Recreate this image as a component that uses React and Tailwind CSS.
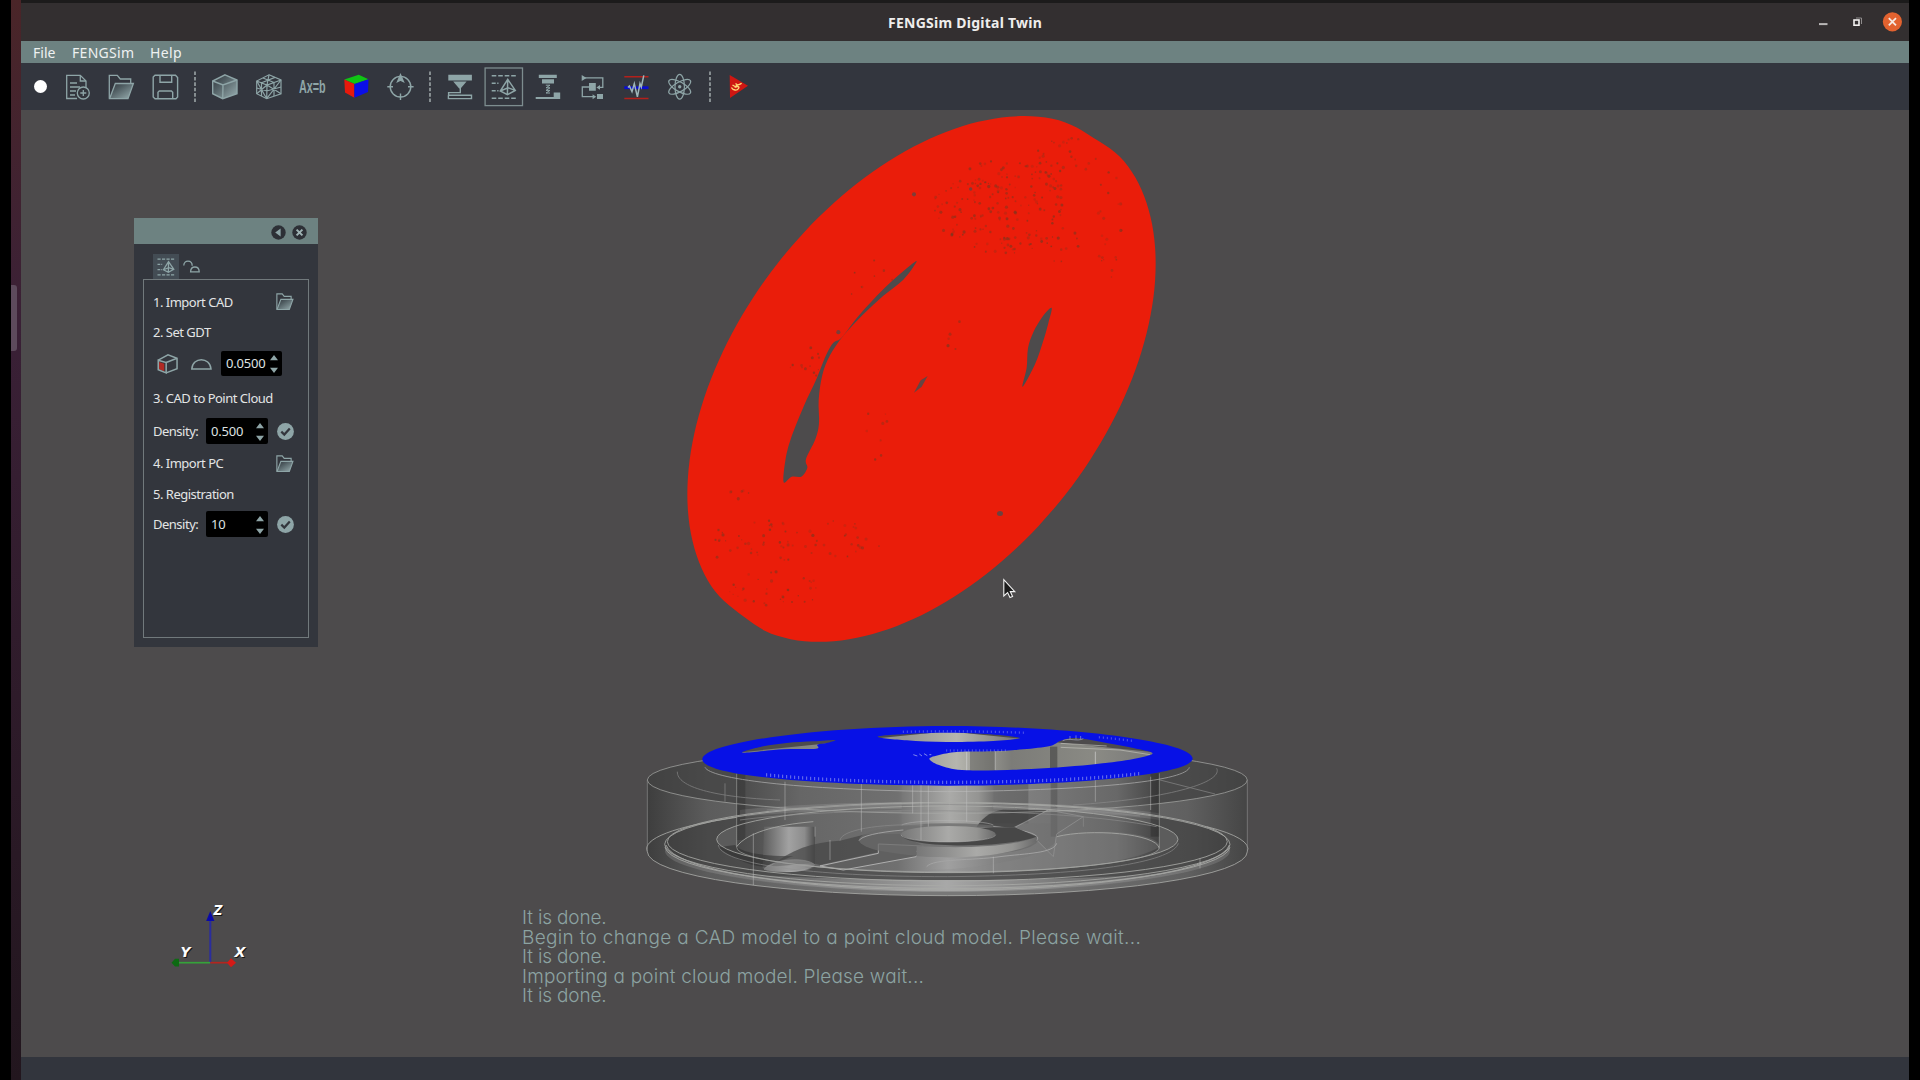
import React from "react";

const INK = "#8ea5a7";

/* Smooth closed or open curve through a list of points. */
function curve(pts, closed = true) {
  const n = pts.length;
  const at = (i) => (closed ? pts[(i + n) % n] : pts[Math.max(0, Math.min(n - 1, i))]);
  let d = `M${pts[0][0]} ${pts[0][1]}`;
  const last = closed ? n : n - 1;
  for (let i = 0; i < last; i++) {
    const [p0, p1, p2, p3] = [at(i - 1), at(i), at(i + 1), at(i + 2)];
    const c1 = [p1[0] + (p2[0] - p0[0]) / 6, p1[1] + (p2[1] - p0[1]) / 6];
    const c2 = [p2[0] - (p3[0] - p1[0]) / 6, p2[1] - (p3[1] - p1[1]) / 6];
    d += `C${c1.map((v) => v.toFixed(1)).join(" ")} ${c2.map((v) => v.toFixed(1)).join(" ")} ${p2[0]} ${p2[1]}`;
  }
  return closed ? d + "Z" : d;
}

function seeded(seed) {
  let s = seed;
  return () => {
    s = (s * 16807) % 2147483647;
    return s / 2147483647;
  };
}

/* ---------- toolbar icons: each fills a 44 x 47 cell ---------- */

function Cell({ children, stroke = 1.3 }) {
  return (
    <svg className="h-[47px] w-11 shrink-0" viewBox="0 0 44 47" fill="none" stroke={INK} strokeWidth={stroke}>
      {children}
    </svg>
  );
}

function Separator({ className }) {
  return (
    <div className={`flex h-[47px] shrink-0 items-center justify-center ${className}`}>
      <svg className="h-8 w-1" viewBox="0 0 4 32">
        <path d="M2 0.5V32" stroke="#a9b3b4" strokeWidth="1.4" strokeDasharray="3.6 1.8" />
      </svg>
    </div>
  );
}

const NewFileIcon = () => (
  <Cell>
    <path d="M21 35.5H10.7V12.3H24.3L30 18V25" />
    <path d="M24.3 12.3V18H30M14 20H21M14 24H24M14 28H20M14 32H19" />
    <circle cx="27.3" cy="30" r="6" fill="#33363d" />
    <path d="M27.3 27V33M24.3 30H30.3" />
  </Cell>
);

function FolderShape() {
  return (
    <>
      <path d="M9.3 35.7V12.3H17.3L20.3 16H30.7V20.3" />
      <path d="M15.3 20.5H33.4L28 35.7H9.6Z" fill="url(#metal)" />
    </>
  );
}
const FolderIcon = () => (
  <Cell>
    <FolderShape />
  </Cell>
);
const SaveIcon = () => (
  <Cell stroke={1.4}>
    <path d="M11 12.3H31.5L33.6 14.6V34L32 35.7H11L9.2 34V14Z" />
    <path d="M16 12.3V19.3H27.7V12.3M14 35.7V29.2L15.3 28H27.4L28.7 29.2V35.7" />
  </Cell>
);
const CubeIcon = () => (
  <Cell stroke={1.4}>
    <path d="M23 11.8L35 17V30.7L20.7 35.7L10.7 30.7V18Z" fill="url(#metal)" />
    <path d="M10.7 18L21 22L35 17M21 22L20.7 35.7" />
  </Cell>
);
const MeshIcon = () => (
  <Cell stroke={1.2}>
    <path d="M23 11.8L35 17V30.7L20.7 35.7L10.7 30.7V18Z" />
    <path d="M10.7 18L21 22L35 17M21 22L20.7 35.7M23 11.8L21 22M17 15L28 19.5M29 14.4L15 20M10.7 18L20.7 35.7M21 22L10.7 30.7M10.7 25L20.8 28L35 24M35 17L20.7 35.7M21 22L35 30.7M28 19.5V33M15.5 20V33" />
  </Cell>
);
const ColorCubeIcon = () => (
  <Cell stroke={0}>
    <path d="M24.7 11.7L34.5 16.3L20.7 21L10.3 16.6Z" fill="#0fc414" />
    <path d="M10.3 16.6L20.4 21V34.8L11 29.5Z" fill="#e8190c" />
    <path d="M20.4 21L34.5 16.3L34 29L20.4 34.8Z" fill="#0a0ee8" />
  </Cell>
);
const TargetIcon = () => (
  <Cell stroke={1.4}>
    <circle cx="22.5" cy="23.7" r="10.3" />
    <path d="M9.3 23.7H15M30 23.7H35.6M22.5 30.5V37" />
    <path d="M22.5 11.8L19.6 18.5L22.5 17.2L25.4 18.5Z" fill={INK} />
  </Cell>
);
const PrinterIcon = () => (
  <Cell stroke={0}>
    <g fill={INK}>
      <path d="M10.3 11.7H33.9V17.4H10.3ZM15.2 18.6H28.6L22.6 25.6H21.2Z" />
    </g>
    <path d="M22.3 25V29.6H10.6V32.3H33.5V35.6H10.4V32.3" fill="none" stroke={INK} strokeWidth="1.4" />
  </Cell>
);
function CloudShape() {
  return (
    <>
      <path d="M9.7 12.7H34.2M9.7 35.3H34.2" strokeDasharray="4.6 1.9" />
      <path d="M9.7 20.3H16.5M9.7 27.7H16.5" strokeDasharray="4 1.5" />
      <path d="M25.7 16.3L18.3 28L25.4 31.7L33.3 27.4ZM25.7 16.3L25.4 31.7M18.3 28L26 24.8L33.3 27.4" />
    </>
  );
}
const CloudIcon = () => (
  <Cell stroke={1.5}>
    <rect x="3.1" y="5" width="37.4" height="37.6" stroke="#7d8d8f" strokeWidth="1.3" />
    <CloudShape />
  </Cell>
);
const MillIcon = () => (
  <Cell stroke={0}>
    <path d="M12.8 11.7H30.8V14.9H12.8ZM16 16.2H28V20.6H16ZM9.7 34H27.7V29.4H34.2V36H9.7Z" fill={INK} />
    <path d="M19.8 22.2H24L20 24.8H24L20 27.4H24L20 30H24" fill="none" stroke={INK} strokeWidth="1" />
  </Cell>
);
const FlowIcon = () => (
  <Cell stroke={1.3}>
    <path d="M15 14.9H32.8V24.4H28M19 24H12.3V33.7H23.5" />
    <path stroke="none" fill={INK} d="M11.7 12L16.5 14.9L11.7 18ZM19 20H25.8V27.8H19ZM27 31H33V36H27ZM22.6 31.2L26.2 33.7L22.6 36.2ZM30 22L26.4 24.4L30 26.8Z" />
  </Cell>
);
const WaveIcon = () => (
  <Cell stroke={1.5}>
    <path d="M10.3 13.7H34.5M10.3 35.6H34.5" stroke="#b3201b" />
    <path d="M10.3 24.7H34.5" stroke="#0a0ed0" strokeWidth="2.8" />
    <path d="M14 24.5L15.4 23L18 28.6L20.3 20.6L23.4 33.8L26 20.5L27.3 24L29.8 12.3" stroke="#9fb6ba" />
  </Cell>
);
const AtomIcon = () => (
  <Cell stroke={1.2}>
    {[30, 90, 150].map((a) => (
      <ellipse key={a} cx="21.7" cy="23.8" rx="12.4" ry="4.7" transform={`rotate(${a} 21.7 23.8)`} />
    ))}
    <circle cx="21.7" cy="23.8" r="1.7" fill={INK} stroke="none" />
  </Cell>
);
const PhoenixIcon = () => (
  <Cell stroke={0}>
    <path d="M12.7 12L31 22.8L13 35Z" fill="#cf1712" />
    <path d="M14.4 24.5C16 27.5 20 28 21.5 25.5C23 23 20 23.5 18.5 24C19 21.5 22 22.5 24.6 20.2M15.5 22L18 23.5M18.5 20.5L20.5 22" stroke="#ffd873" strokeWidth="1.4" fill="none" />
  </Cell>
);

/* ---------- window chrome ---------- */

function TitleBar() {
  return (
    <div className="relative flex h-[38px] shrink-0 items-center justify-center bg-[#332f30]">
      <span className="font-['Noto_Sans','Liberation_Sans',sans-serif] text-[14px] font-bold tracking-[0.25px] text-[#efedec]">
        FENGSim Digital Twin
      </span>
      <div className="absolute right-[7px] top-[9px] flex items-center">
        <svg className="h-5 w-[90px]" viewBox="0 0 90 20">
          <path d="M7 12.1H15.5" stroke="#b9b7b6" strokeWidth="2" />
          <path d="M44 6H49.5V12" stroke="#8f8c8c" strokeWidth="1" fill="none" />
          <rect x="42" y="8" width="5" height="5.2" stroke="#f2f0ef" strokeWidth="1.6" fill="none" />
          <circle cx="80.4" cy="9.8" r="9.6" fill="#e2622f" />
          <path d="M76.8 6.2L84 13.4M84 6.2L76.8 13.4" stroke="#f6e9e2" strokeWidth="1.8" />
        </svg>
      </div>
    </div>
  );
}

function MenuBar() {
  return (
    <nav className="flex h-[22px] shrink-0 items-center bg-[#6d8281] pl-3 pt-0.5 font-['Noto_Sans','Liberation_Sans',sans-serif] text-[14px] leading-none text-[#eef1f1]">
      <span className="w-[39px]">File</span>
      <span className="w-[78px] tracking-[0.3px]">FENGSim</span>
      <span className="tracking-[0.4px]">Help</span>
    </nav>
  );
}

function ToolBar() {
  return (
    <div className="flex h-[47px] shrink-0 items-center bg-[#33363e] pl-1">
      <div className="flex w-[31px] items-center justify-center">
        <div className="size-[13px] rounded-full bg-white" />
      </div>
      <NewFileIcon />
      <FolderIcon />
      <SaveIcon />
      <Separator className="w-[14px]" />
      <CubeIcon />
      <MeshIcon />
      <div className="flex w-11 shrink-0 items-center justify-center">
        <span className="inline-block scale-x-[0.6] pt-px font-['Liberation_Sans',sans-serif] text-[18px] font-bold leading-none text-[#8ea5a7]">
          Ax=b
        </span>
      </div>
      <ColorCubeIcon />
      <TargetIcon />
      <Separator className="w-4" />
      <PrinterIcon />
      <CloudIcon />
      <MillIcon />
      <FlowIcon />
      <WaveIcon />
      <AtomIcon />
      <Separator className="w-[15px]" />
      <PhoenixIcon />
    </div>
  );
}

/* ---------- inspection panel ---------- */

function SmallFolder() {
  return (
    <svg className="ml-auto mr-[14px] size-[18px]" viewBox="8 11 27 27" fill="none" stroke={INK} strokeWidth="1.7">
      <FolderShape />
    </svg>
  );
}

function Check() {
  return (
    <svg className="ml-auto mr-[14.5px] size-[17px]" viewBox="0 0 17 17">
      <circle cx="8.5" cy="8.5" r="8.4" fill={INK} />
      <path d="M4.3 8.6L7.3 11.6L12.8 5.4" stroke="#33363d" strokeWidth="2.2" fill="none" />
    </svg>
  );
}

function Spin({ value, className }) {
  return (
    <div className={`flex items-center justify-between rounded-[2px] bg-black pl-[5px] pr-[3px] tracking-[-0.2px] ${className}`}>
      <span className="text-[#dfe2e2]">{value}</span>
      <svg className="h-[21px] w-[10px]" viewBox="0 0 10 21" fill={INK}>
        <path d="M5 2L9 7.2H1ZM5 20L9 14.8H1Z" />
      </svg>
    </div>
  );
}

function Panel() {
  return (
    <section className="absolute left-[113px] top-[108px] flex h-[429px] w-[184px] flex-col bg-[#33363d] font-['Noto_Sans','Liberation_Sans',sans-serif] text-[13px] leading-none tracking-[-0.5px] text-[#e3e5e5]">
      <header className="flex h-[26px] shrink-0 items-center justify-end gap-[6px] bg-[#6d8281] pr-[11px] pt-0.5">
        <svg className="size-[15px]" viewBox="0 0 15 15">
          <circle cx="7.5" cy="7.5" r="7.2" fill="#2d3036" />
          <path d="M9.6 3.6V11.4L4.2 7.5Z" fill="#8ea5a7" />
        </svg>
        <svg className="size-[15px]" viewBox="0 0 15 15">
          <circle cx="7.5" cy="7.5" r="7.2" fill="#2d3036" />
          <path d="M4.6 4.6L10.4 10.4M10.4 4.6L4.6 10.4" stroke="#9fb3b4" strokeWidth="2" />
        </svg>
      </header>
      <div className="flex h-[35px] shrink-0 items-end pl-[19px]">
        <div className="flex h-[25px] w-[26px] items-center justify-center bg-[#434c54]">
          <svg className="h-[18px] w-[18px]" viewBox="9 11 26 26" fill="none" stroke={INK} strokeWidth="1.8">
            <CloudShape />
          </svg>
        </div>
        <svg className="ml-1 h-[25px] w-[18px]" viewBox="0 0 18 25" fill="none" stroke={INK} strokeWidth="1.3">
          <path d="M0.8 11.5C0.8 5.5 9.2 5.5 9.2 11.8" />
          <path d="M7.6 17.8C7.8 11.4 16 11.4 16.2 17.8Z" />
        </svg>
      </div>
      <div className="mx-[9px] mb-[9px] flex flex-1 flex-col border border-[#71797c] pl-[9px]">
        <div className="mt-[10px] flex h-[24px] items-center">
          <span>1. Import CAD</span>
          <SmallFolder />
        </div>
        <div className="mt-[7px] flex h-[23px] items-center">2. Set GDT</div>
        <div className="mt-[7px] flex h-[25px] items-center">
          <svg className="ml-[4px] h-[22px] w-[21px]" viewBox="0 0 22 22" fill="none" stroke={INK} strokeWidth="1.6">
            <path d="M2.2 9L7.6 10.8V18.6L2.2 16.4Z" fill="#b02a24" stroke="none" />
            <path d="M1.3 7V17L9.6 20.3V9.4Z" />
            <path d="M1.3 7L11.5 1.4L21 5V16L9.6 20.3M9.6 9.4L21 5" />
          </svg>
          <svg className="ml-[13px] h-[22px] w-[21px]" viewBox="0 0 21 22" fill="none" stroke={INK} strokeWidth="1.5">
            <path d="M0.8 16C1.5 3.6 19 3.6 20 16Z" />
          </svg>
          <Spin value="0.0500" className="ml-[9px] h-[25px] w-[61px]" />
        </div>
        <div className="mt-[10px] flex h-[24px] items-center">3. CAD to Point Cloud</div>
        <div className="mt-[8px] flex h-[26px] items-center">
          <span className="w-[53px]">Density:</span>
          <Spin value="0.500" className="h-[26px] w-[62px]" />
          <Check />
        </div>
        <div className="mt-[8px] flex h-[23px] items-center">
          <span>4. Import PC</span>
          <SmallFolder />
        </div>
        <div className="mt-[7px] flex h-[24px] items-center">5. Registration</div>
        <div className="mt-[5px] flex h-[26px] items-center">
          <span className="w-[53px]">Density:</span>
          <Spin value="10" className="h-[26px] w-[62px]" />
          <Check />
        </div>
      </div>
    </section>
  );
}

/* ---------- scanned point cloud ---------- */

/* Tilted disc: an ellipse whose rim flattens slightly at two places. */
function discOutline() {
  const rad = Math.PI / 180;
  const pts = [];
  for (let a = 0; a < 360; a += 4) {
    const dent = 0.011 * Math.exp(-(((a - 42) / 8) ** 2)) + 0.01 * Math.exp(-(((a - 219) / 8) ** 2));
    const k = 1 - dent;
    pts.push([
      +(754.5 + 702.5 * k * Math.cos(a * rad)).toFixed(1),
      +(781 - 736 * k * Math.cos((a - 64) * rad)).toFixed(1),
    ]);
  }
  return curve(pts);
}

const SLOT = [
  [740, 452], [712, 470], [640, 530], [570, 600], [515, 665], [490, 680], [468, 715], [440, 780], [400, 860],
  [362, 950], [346, 1010], [341, 1070], [365, 1055], [395, 1054], [412, 1030], [408, 1005], [436, 950],
  [447, 905], [446, 840], [457, 770], [480, 715], [520, 660], [580, 600], [640, 548], [700, 503],
];
const SLIT = [[1145, 582], [1118, 606], [1090, 650], [1074, 695], [1070, 750], [1058, 803], [1095, 740], [1118, 680], [1135, 625]];
const SPECK_FIELDS = [
  [1000, 300, 210, 130, 190], [1190, 160, 90, 60, 26], [1320, 340, 40, 180, 22], [1180, 420, 60, 60, 10],
  [410, 720, 60, 60, 14], [620, 930, 40, 80, 8], [390, 1230, 250, 60, 60], [300, 1370, 160, 50, 34],
  [600, 500, 80, 60, 8], [860, 660, 30, 60, 5], [200, 1110, 40, 30, 6], [150, 1250, 20, 60, 6],
];

function specks() {
  const r = seeded(4217);
  const out = [];
  for (const [cx, cy, rx, ry, n] of SPECK_FIELDS) {
    for (let i = 0; i < n; i++) {
      const a = r() * Math.PI * 2;
      const q = Math.sqrt(r());
      out.push([cx + Math.cos(a) * rx * q, cy + Math.sin(a) * ry * q, 1.8 + r() * 3, 0.2 + r() * 0.42]);
    }
  }
  return out;
}

function PointCloud() {
  return (
    <g transform="translate(670 100) scale(0.33333 0.35714)">
      <path d={discOutline()} fill="#ea1d0a" />
      {specks().map(([x, y, s, o], i) => (
        <circle key={i} cx={x} cy={y} r={s} fill="#6e3a22" opacity={o} />
      ))}
      <g fill="#4d4b4c">
        <path d={curve(SLOT)} />
        <path d={curve(SLIT)} />
        <path d="M773 773L752 785L732 820L755 803Z" opacity="0.85" />
        <ellipse cx="990" cy="1158" rx="9" ry="7" opacity="0.8" />
        <circle cx="732" cy="264" r="6" opacity="0.7" />
        <circle cx="902" cy="249" r="5" opacity="0.7" />
        <circle cx="505" cy="650" r="6" opacity="0.7" />
      </g>
    </g>
  );
}

/* ---------- CAD wheel with its sampled top face ---------- */

const FACE_HOLES = [
  [[308, 128], [370, 109], [440, 99], [520, 94], [585, 90], [560, 99], [532, 104], [528, 116], [430, 118]],
  [[713, 80], [800, 72], [920, 68], [1040, 72], [1140, 84], [1060, 93], [920, 96], [800, 91]],
  [[868, 147], [900, 134], [960, 125], [1060, 124], [1150, 118], [1230, 108], [1262, 92], [1310, 84], [1400, 99], [1480, 114], [1538, 130], [1480, 147], [1350, 164], [1150, 178], [980, 181], [905, 168]],
];

function Rim() {
  const front = [];
  const back = [];
  for (let x = 380; x <= 1500; x += 12) {
    const y = 148 + 69 * Math.sqrt(1 - ((x - 922) / 735) ** 2);
    front.push(`M${x} ${(y - 5).toFixed(1)}V${(y + 5).toFixed(1)}`);
  }
  for (let x = 790; x <= 1480; x += 12) {
    if (x > 1150 && x < 1370) continue;
    const y = 147 - 83 * Math.sqrt(1 - ((x - 922) / 735) ** 2);
    back.push(`M${x} ${(y - 3.5).toFixed(1)}V${(y + 3.5).toFixed(1)}`);
  }
  for (let x = 920; x <= 1100; x += 11) back.push(`M${x} 118V125`);
  return (
    <g stroke="#a9aef0" strokeWidth="3">
      <path d={front.join("")} opacity="0.65" />
      <path d={back.join("")} opacity="0.45" />
    </g>
  );
}

function Wheel() {
  return (
    <g transform="translate(640 710) scale(0.33333)" fill="none" strokeWidth="2.8">
      {/* outer shell */}
      <path d="M22 210A900 100 0 0 1 1822 210V425A900 132 0 0 1 22 425Z" fill="url(#shell)" />
      <ellipse cx="922" cy="210" rx="900" ry="100" fill="#434343" opacity="0.75" />
      <ellipse cx="922" cy="405" rx="848" ry="128" fill="#3c3c3c" opacity="0.6" />
      <path d="M75 400A848 140 0 0 0 1770 400L1770 425A848 122 0 0 1 75 425Z" fill="#a8a8a8" opacity="0.25" />
      <path d="M180 480C500 566 1350 566 1660 480C1350 520 500 520 180 480Z" fill="url(#band)" />
      <ellipse cx="922" cy="388" rx="692" ry="100" fill="#686868" opacity="0.6" />

      {/* drum */}
      <path d="M290 160H1558V410A634 78 0 0 1 290 410Z" fill="url(#drum)" />
      <path d="M290 283Q600 325 922 288Q1300 290 1558 345V283Q1300 310 922 310Q550 310 290 283Z" fill="#c0c0c0" opacity="0.1" />
      <path d="M300 300C600 265 1250 265 1558 310L1558 330C1250 285 600 285 300 322Z" fill="#d0d0d0" opacity="0.16" />
      <path d="M785 190H1060V350A138 22 0 0 1 785 370Z" fill="url(#hub)" />
      <rect x="1060" y="190" width="105" height="150" fill="#222" opacity="0.2" />
      <rect x="1165" y="190" width="70" height="150" fill="#fff" opacity="0.03" />
      <rect x="1232" y="190" width="20" height="190" fill="#222" opacity="0.22" />
      <rect x="1532" y="190" width="27" height="190" fill="#1c1c1c" opacity="0.3" />
      <rect x="290" y="190" width="26" height="200" fill="#1c1c1c" opacity="0.25" />

      {/* lightening holes and spokes */}
      <path d="M372 350H525V470C500 490 395 490 368 475Z" fill="url(#boss)" />
      <path d="M235 412C270 440 330 470 375 470L460 438C360 440 300 425 285 405Z" fill="#2e2e2e" opacity="0.55" />
      <path d="M390 470C450 420 520 395 600 392L680 372L780 372L850 408L700 430L540 465L520 460Z" fill="#454545" opacity="0.7" />
      <path d="M540 468L715 430V402L850 408L828 440L610 480Z" fill="#606060" stroke="#b4b4b4" />
      <path d="M1010 350C1030 318 1060 302 1090 299L1220 301L1120 352Z" fill="#414141" opacity="0.85" />
      <path d="M1125 352L1225 300L1330 320L1250 372L1240 440L1180 380Z" fill="#707070" opacity="0.5" stroke="#a8a8a8" />
      <path d="M555 482H1100C1300 480 1500 450 1560 410C1560 370 1380 350 1250 378C1260 440 1000 480 860 480" fill="#888" opacity="0.28" />
      <ellipse cx="925" cy="390" rx="268" ry="50" fill="#6b6b6b" opacity="0.75" />
      <path d="M657 392A268 40 0 0 1 790 360M1060 350A268 40 0 0 1 1193 385A268 42 0 0 1 830 424" stroke="#a2a2a2" />
      <path d="M830 408V438C900 445 1100 450 1190 395V380C1100 420 900 412 830 408Z" fill="url(#hub)" />
      <path d="M785 376C790 412 1080 420 1190 380L1125 352H1060Z" fill="#474747" />
      <ellipse cx="925" cy="372" rx="142" ry="24" fill="url(#hub)" />
      <path d="M783 374A142 22 0 0 0 1067 374M785 345A142 18 0 0 1 1060 345" stroke="#b4b4b4" strokeWidth="2" opacity="0.8" />
      <path d="M860 470C880 445 1000 452 1080 440C1160 430 1240 430 1250 400" stroke="#a5a5a5" />

      {/* silhouette lines */}
      <g stroke="#a9aaa7" opacity="0.9">
        <ellipse cx="922" cy="210" rx="900" ry="100" opacity="0.85" />
        <path d="M22 425A900 132 0 0 0 1822 425" />
        <path d="M22 425A900 132 0 0 1 290 322M1822 425A900 132 0 0 0 1700 350" />
        <ellipse cx="922" cy="395" rx="840" ry="118" />
        <ellipse cx="922" cy="403" rx="848" ry="124" />
        <path d="M78 405A846 142 0 0 0 1768 405" />
        <path d="M75 412A848 128 0 0 0 1770 412" />
        <ellipse cx="922" cy="388" rx="692" ry="100" />
        <path d="M290 190V412A634 74 0 0 0 1558 412V190" opacity="0.7" />
        <path d="M290 410C320 370 400 345 520 335M1250 380C1350 355 1550 370 1558 415" />
      </g>
      <g stroke="#8c8c8c" opacity="0.7">
        <path d="M112 185C110 230 220 262 420 270M1730 175C1750 215 1600 265 1300 285" />
        <path d="M195 172C210 205 450 240 922 245C1400 240 1640 210 1648 172" stroke="#b9b9b9" />
        <path d="M235 405C240 460 500 500 922 500C1400 495 1600 450 1615 400" />
        <path d="M255 220V275M22 210V425M1822 210V425M1560 210L1725 252" />
        <path d="M300 330C600 290 1250 290 1550 350M380 300C700 275 1150 275 1500 318M600 392C600 360 720 340 850 345M1330 320V350" />
      </g>
      <g stroke="#c4c4c4" opacity="0.7" strokeWidth="2">
        <path d="M340 370V525M435 215V330M664 215V365M818 225V310M843 225V390M1060 440V490M1366 195V275M1532 200V300M1680 445V475M980 190V335M525 350V380M865 225V350M570 390V450" />
      </g>
      <path d="M372 478C400 445 500 440 525 465C490 490 400 490 372 478Z" fill="#999" opacity="0.5" stroke="#bbb" strokeWidth="2" />

      {/* inside walls seen through the face */}
      <path d="M290 128L922 64L1558 128V160L922 190L290 160Z" fill="url(#inside)" />
      <path d="M980 120V185M1065 120V180M1366 125V165" stroke="#d0d0d0" strokeWidth="3" opacity="0.7" />
      <path d="M990 120H1065V185H990Z" fill="#4a4a48" opacity="0.4" />
      <path d="M1230 110H1252V178H1230Z" fill="#333" opacity="0.5" />
      <path d="M1262 112L1440 120L1530 134M1262 100L1400 108" stroke="#c3c3bb" opacity="0.7" />

      {/* sampled face */}
      <path
        d={"M187 148C190 95 560 48 922 48C1290 48 1655 95 1658 145C1658 195 1290 227 922 227C560 227 187 200 187 148Z" + FACE_HOLES.map((h) => curve(h)).join("")}
        fill="#0711e6"
        fillRule="evenodd"
      />
      <Rim />
      <path d="M820 134L832 138M838 132L846 138M852 131L862 137M868 134H874" stroke="#a9aef0" opacity="0.8" />
      <path d="M1268 92C1290 82 1310 96 1330 86M1290 78V88M1308 76V88M1322 78V88" stroke="#b8bbd8" opacity="0.6" />
    </g>
  );
}

const AXIS_LABELS = [
  { name: "Z", x: 213.5, y: 915, w: 9 },
  { name: "Y", x: 180.5, y: 957, w: 10 },
  { name: "X", x: 234.5, y: 957, w: 11 },
];

function AxisText() {
  return AXIS_LABELS.map((l) => (
    <text key={l.name} x={l.x} y={l.y} textLength={l.w} lengthAdjust="spacingAndGlyphs">
      {l.name}
    </text>
  ));
}

function Axes() {
  return (
    <g>
      <path d="M210.3 962.7V918" stroke="#2a2d9e" strokeWidth="2" />
      <path d="M210.3 911L206.2 921H214.4Z" fill="#0a0aa8" />
      <path d="M210.3 962.7H179" stroke="#35a23a" strokeWidth="1.7" />
      <path d="M171.5 962.7L175 958.8H179V966.6H175Z" fill="#0d6a12" />
      <path d="M210.3 962.7H229" stroke="#b3261f" strokeWidth="1.7" />
      <path d="M227 962.7L231 958.2L236 962.7L231 967.2Z" fill="#d41a17" />
      <g fontFamily="'DejaVu Sans', sans-serif" fontWeight="700" fontStyle="italic" fontSize="14.5">
        <g transform="translate(1 1)" fill="#151515">
          <AxisText />
        </g>
        <g fill="#fff">
          <AxisText />
        </g>
      </g>
    </g>
  );
}

function Scene() {
  return (
    <svg className="absolute inset-0 h-full w-full" viewBox="21 110 1888 947">
      <defs>
        <linearGradient id="metal" x1="0" y1="0" x2="1" y2="1">
          <stop offset="0" stopColor="#33363d" />
          <stop offset="0.35" stopColor="#4f5c61" />
          <stop offset="1" stopColor="#9ab0b2" />
        </linearGradient>
        <linearGradient id="shell">
          <stop offset="0" stopColor="#3e3e3e" />
          <stop offset="0.1" stopColor="#5c5c5c" />
          <stop offset="0.4" stopColor="#787878" />
          <stop offset="0.6" stopColor="#787878" />
          <stop offset="0.9" stopColor="#606060" />
          <stop offset="1" stopColor="#454545" />
        </linearGradient>
        <linearGradient id="drum">
          <stop offset="0" stopColor="#4a4a4a" />
          <stop offset="0.15" stopColor="#666" />
          <stop offset="0.38" stopColor="#707070" />
          <stop offset="0.5" stopColor="#a0a0a0" />
          <stop offset="0.62" stopColor="#808080" />
          <stop offset="0.9" stopColor="#686868" />
          <stop offset="1" stopColor="#444" />
        </linearGradient>
        <linearGradient id="hub">
          <stop offset="0" stopColor="#777" />
          <stop offset="0.5" stopColor="#aaaaa8" />
          <stop offset="0.8" stopColor="#949492" />
          <stop offset="1" stopColor="#6a6a6a" />
        </linearGradient>
        <linearGradient id="boss">
          <stop offset="0" stopColor="#5c5c5c" />
          <stop offset="0.5" stopColor="#a2a2a2" />
          <stop offset="0.8" stopColor="#8c8c8c" />
          <stop offset="1" stopColor="#4d4d4d" />
        </linearGradient>
        <linearGradient id="band">
          <stop offset="0" stopColor="#777" stopOpacity="0.2" />
          <stop offset="0.5" stopColor="#a8a8a8" />
          <stop offset="1" stopColor="#777" stopOpacity="0.2" />
        </linearGradient>
        <linearGradient id="inside">
          <stop offset="0" stopColor="#777a76" />
          <stop offset="0.4" stopColor="#969690" />
          <stop offset="0.52" stopColor="#b5b5ae" />
          <stop offset="0.65" stopColor="#7c7c78" />
          <stop offset="0.85" stopColor="#8a8a84" />
          <stop offset="1" stopColor="#777" />
        </linearGradient>
      </defs>
      <PointCloud />
      <Wheel />
      <Axes />
      <path d="M1003.8 579.6V596L1007.6 592.6L1010 597.6L1012.6 596.4L1010.3 591.6H1014.8Z" fill="#1c1c1c" stroke="#f2f2f2" strokeWidth="1.1" />
    </svg>
  );
}

const LOG = [
  { text: "It is done.", track: "tracking-[-0.15px]" },
  { text: "Begin to change a CAD model to a point cloud model. Please wait...", track: "tracking-[0.32px]" },
  { text: "It is done.", track: "tracking-[-0.15px]" },
  { text: "Importing a point cloud model. Please wait...", track: "tracking-[0.2px]" },
  { text: "It is done.", track: "tracking-[-0.15px]" },
];

function Console() {
  return (
    <div className="absolute left-[501px] top-[798px] font-['Inter','Lato',sans-serif] text-[19px] font-light leading-[19.5px] text-[#8ca3a2] [font-feature-settings:'cv11']">
      {LOG.map((l, i) => (
        <p key={i} className={`whitespace-nowrap ${l.track}`}>
          {l.text}
        </p>
      ))}
    </div>
  );
}

export default function App() {
  return (
    <div className="flex h-[1080px] w-[1920px] overflow-hidden bg-black">
      <div className="w-[11px] shrink-0 bg-black" />
      <div className="flex w-[10px] shrink-0 flex-col bg-gradient-to-b from-[#4a2528] via-[#3a2036] via-30% to-[#22161e] pt-[285px]">
        <div className="h-[66px] w-[6px] rounded-r-[3px] bg-[#5d4a5c]" />
      </div>
      <main className="flex w-[1888px] shrink-0 flex-col">
        <div className="h-[3px] shrink-0 bg-[#1c1b1b]" />
        <TitleBar />
        <MenuBar />
        <ToolBar />
        <div className="relative h-[947px] shrink-0 bg-[#4d4b4c]">
          <Scene />
          <Panel />
          <Console />
        </div>
        <footer className="flex-1 bg-[#32353d]" />
      </main>
    </div>
  );
}
